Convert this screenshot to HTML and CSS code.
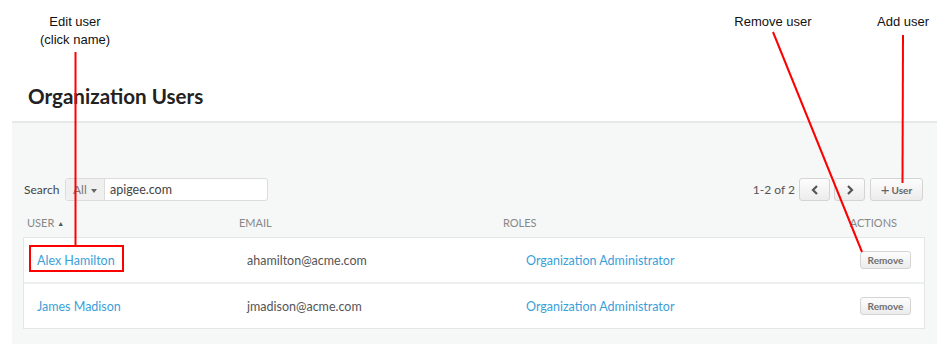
FILE: index.html
```html
<!DOCTYPE html>
<html lang="en">
<head>
    <meta charset="UTF-8">
    <title>Organization Users</title>
    <link rel="stylesheet" href="styles.css">
</head>
<body>
    <div class="page">
        <h1 class="title">Organization Users</h1>

        <div class="panel">
            <div class="toolbar">
                <div class="search">
                    <span class="search-label">Search</span>
                    <div class="input-group">
                        <div class="filter">All <span class="caret"></span></div>
                        <div class="query">apigee.com</div>
                    </div>
                </div>
                <div class="pager">
                    <span class="count">1-2 of 2</span>
                    <div class="btn nav-btn">
                        <svg width="8" height="10" viewBox="0 0 8 10"><polyline points="6,1 2,5 6,9" fill="none" stroke="#555" stroke-width="2.2"/></svg>
                    </div>
                    <div class="btn nav-btn">
                        <svg width="8" height="10" viewBox="0 0 8 10"><polyline points="2,1 6,5 2,9" fill="none" stroke="#555" stroke-width="2.2"/></svg>
                    </div>
                    <div class="btn add-btn"><span class="plus">+</span> User</div>
                </div>
            </div>

            <div class="table-head">
                <div>USER <span class="sort">&#9650;</span></div>
                <div>EMAIL</div>
                <div>ROLES</div>
                <div class="actions-head">ACTIONS</div>
            </div>

            <div class="table">
                <div class="row">
                    <a class="link">Alex Hamilton</a>
                    <div class="email">ahamilton@acme.com</div>
                    <a class="link">Organization Administrator</a>
                    <div class="btn remove-btn">Remove</div>
                </div>
                <div class="row">
                    <a class="link">James Madison</a>
                    <div class="email">jmadison@acme.com</div>
                    <a class="link">Organization Administrator</a>
                    <div class="btn remove-btn">Remove</div>
                </div>
            </div>
        </div>
    </div>

    <!-- callouts drawn over the screenshot -->
    <div class="callout" style="left:75px;top:13px">Edit user<br>(click name)</div>
    <div class="callout" style="left:773px;top:13px">Remove user</div>
    <div class="callout" style="left:903px;top:13px">Add user</div>
    <svg class="marks" width="949" height="352" viewBox="0 0 949 352">
        <line x1="75.5" y1="52" x2="75.5" y2="246" stroke="#f00" stroke-width="2"/>
        <rect x="30" y="246" width="93" height="25" fill="none" stroke="#f00" stroke-width="2"/>
        <line x1="773" y1="32" x2="862" y2="252" stroke="#f00" stroke-width="2"/>
        <line x1="903" y1="35" x2="902.5" y2="183" stroke="#f00" stroke-width="2"/>
    </svg>
</body>
</html>
```

FILE: styles.css
```css
* {
    margin: 0;
    padding: 0;
    box-sizing: border-box;
}
body {
    width: 949px;
    height: 352px;
    background: #ffffff;
    font-family: Lato, "Open Sans", sans-serif;
    color: #555;
    position: relative;
    overflow: hidden;
}
.page {
    padding-top: 84px;
}
.title {
    font-size: 20.6px;
    line-height: 24px;
    font-weight: 700;
    color: #222;
    margin-left: 28px;
    margin-bottom: 13px;
}
.panel {
    margin-left: 12px;
    width: 925px;
    height: 223px;
    background: #f6f7f7;
    border-top: 2px solid #e7e8e8;
    padding: 55px 12px 15px 11px;
}
.toolbar {
    display: flex;
    justify-content: space-between;
    align-items: center;
    height: 23px;
    padding-right: 2px;
}
.search {
    display: flex;
    align-items: center;
}
.search-label {
    font-size: 12px;
    color: #444;
    margin-left: 1px;
    width: 42px;
}
.input-group {
    display: flex;
    width: 203px;
    height: 23px;
    border: 1px solid #dcdcdc;
    border-radius: 3px;
    background: #fff;
    margin-left: -1px;
}
.filter {
    width: 39px;
    background: #f0f0f0;
    border-right: 1px solid #dcdcdc;
    font-size: 12px;
    line-height: 21px;
    color: #777;
    padding-left: 7px;
    border-radius: 3px 0 0 3px;
}
.caret {
    display: inline-block;
    width: 0;
    height: 0;
    border-left: 3.5px solid transparent;
    border-right: 3.5px solid transparent;
    border-top: 4px solid #666;
    vertical-align: middle;
    margin-left: 1px;
}
.query {
    font-size: 12.5px;
    line-height: 21px;
    color: #444;
    padding-left: 5px;
}
.pager {
    display: flex;
    align-items: center;
    gap: 4px;
}
.count {
    font-size: 12px;
    color: #555;
}
.btn {
    display: flex;
    align-items: center;
    justify-content: center;
    border: 1px solid #d4d4d4;
    border-radius: 3px;
    background: linear-gradient(#fdfdfd, #ececec);
    color: #666;
    font-weight: 700;
}
.nav-btn {
    width: 31px;
    height: 23px;
}
.add-btn {
    width: 53px;
    height: 23px;
    font-size: 10px;
    margin-left: 1px;
}
.plus {
    font-size: 15px;
    font-weight: 400;
    margin-right: 2px;
    line-height: 1;
}
.table-head {
    display: grid;
    grid-template-columns: 212px 264px 1fr auto;
    font-size: 11px;
    line-height: 16px;
    color: #888;
    padding: 0 28px 0 4px;
    margin-top: 14px;
    margin-bottom: 6px;
}
.sort {
    font-size: 7px;
    color: #555;
    vertical-align: 1px;
}
.table {
    border: 1px solid #e4e5e5;
    background: #fff;
}
.row {
    display: grid;
    grid-template-columns: 210px 279px 1fr auto;
    align-items: center;
    height: 44px;
    padding: 0 13px;
    font-size: 12.5px;
}
.row + .row {
    height: 46px;
    border-top: 2px solid #eeefef;
}
.link {
    color: #3a9fd9;
}
.email {
    color: #555;
}
.remove-btn {
    width: 51px;
    height: 18px;
    font-size: 10px;
    color: #707070;
}
.callout {
    position: absolute;
    transform: translateX(-50%);
    font-family: "Liberation Sans", Arial, sans-serif;
    font-size: 13px;
    line-height: 18px;
    color: #111;
    text-align: center;
    white-space: nowrap;
}
.marks {
    position: absolute;
    top: 0;
    left: 0;
    pointer-events: none;
}
```
